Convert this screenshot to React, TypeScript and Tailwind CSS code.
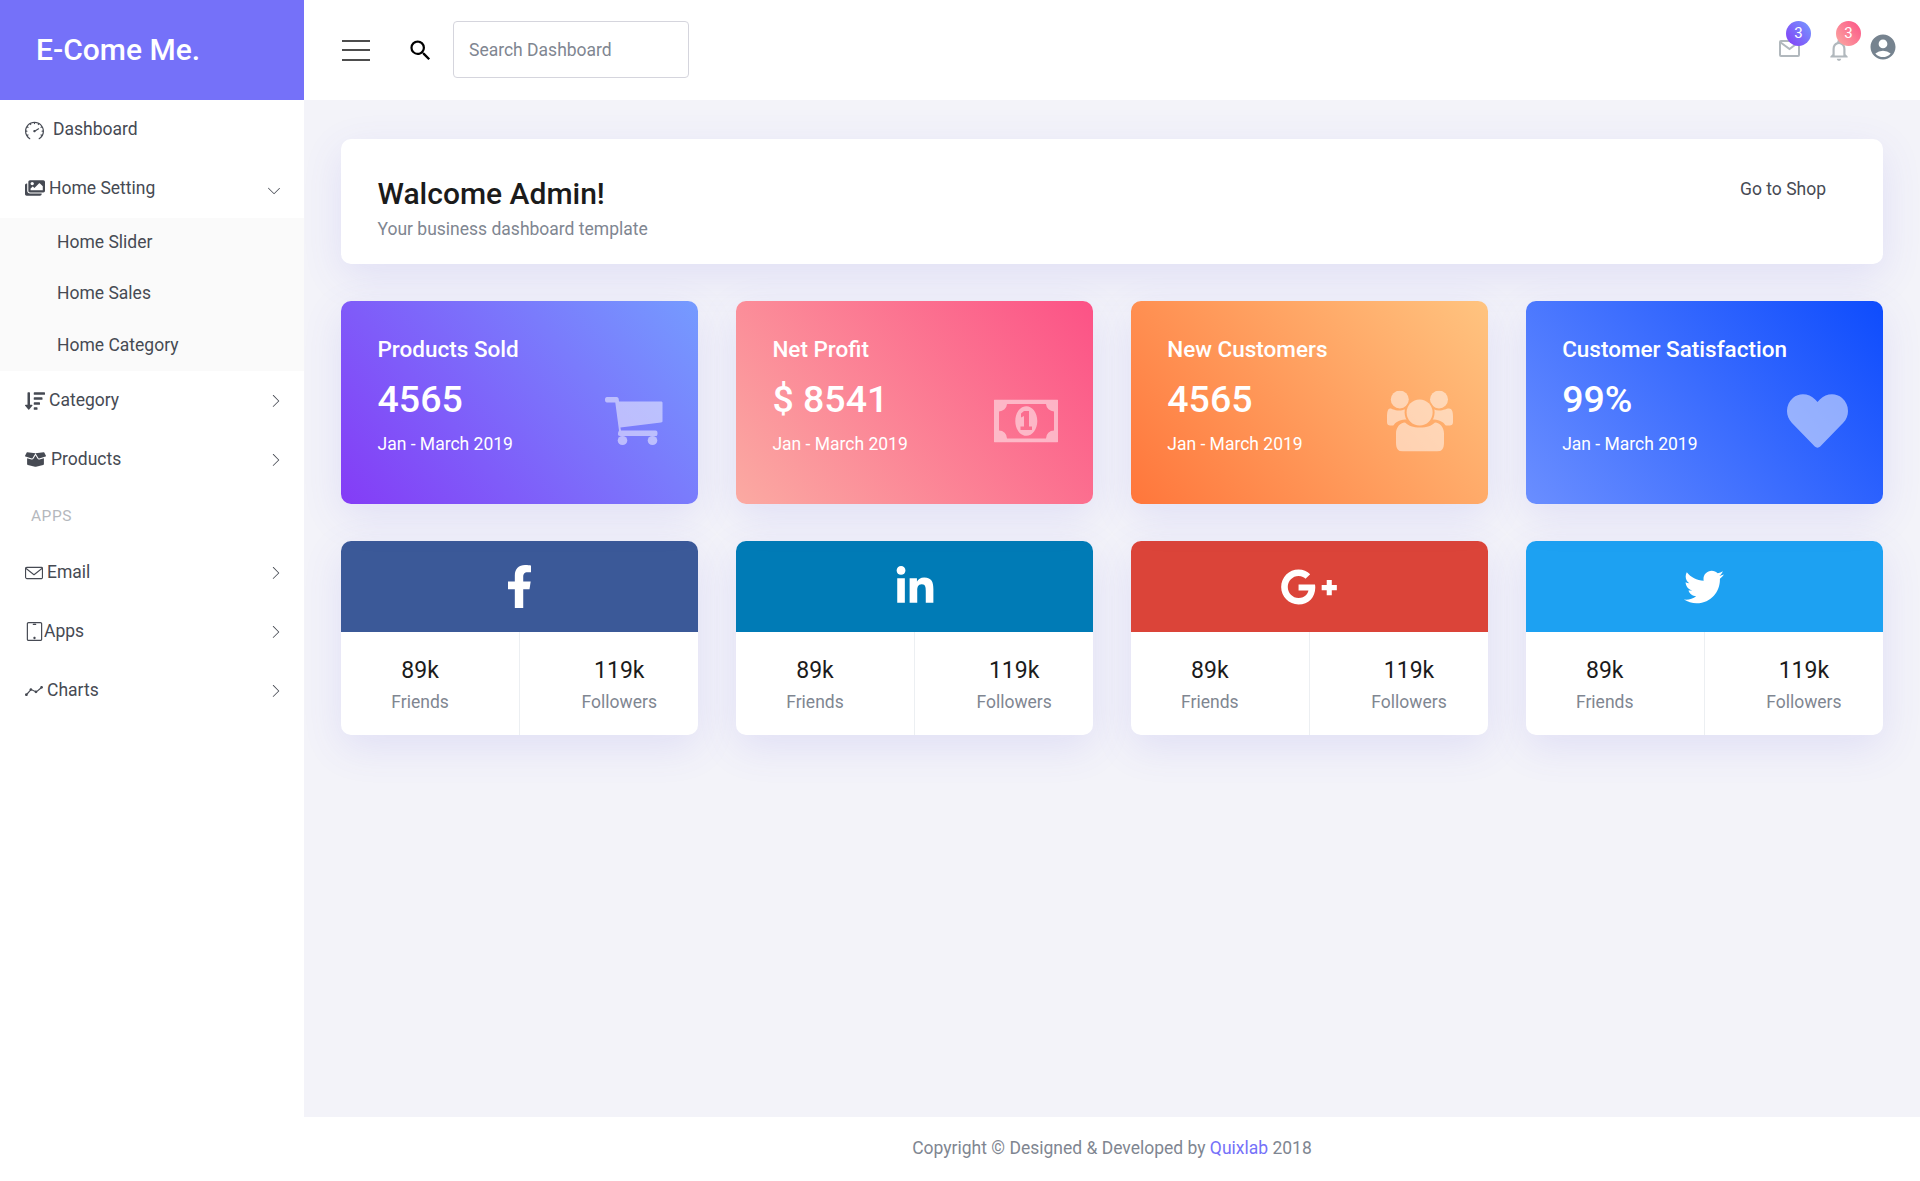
import React from 'react';
import { FaHeart, FaFacebookF, FaLinkedinIn, FaGooglePlusG, FaTwitter, FaImages, FaSortAmountDown, FaBoxOpen } from 'react-icons/fa';
import { SlSpeedometer, SlEnvolope, SlScreenTablet, SlGraph, SlArrowRight, SlArrowDown } from 'react-icons/sl';
import { MdSearch, MdAccountCircle, MdOutlineNotifications } from 'react-icons/md';

// ---- drawn icons ----

function CartIcon() {
  return (
    <svg width="58" height="48" viewBox="0 0 58 48" fill="white">
      <path d="M2 0H11.5C12.8 0 13.5.8 13.7 2L14 4.5H56C57 4.5 57.5 5 57.5 6V24C57.5 25 57 25.3 56 25.5L15.4 30.5L16 33.5H50.5C52 33.5 52.5 34.3 52.5 36.2C52.5 38.2 52 39 50.5 39H15C13.5 39 13 38.2 13 37C13 35.8 13.3 35 14 33.5L10.3 5.5H2C.7 5.5 0 4.5 0 2.8C0 1 .7 0 2 0Z" />
      <ellipse cx="17.5" cy="43.5" rx="4.8" ry="4.5" />
      <ellipse cx="47.5" cy="43.5" rx="4.8" ry="4.5" />
    </svg>
  );
}

function BillIcon() {
  return (
    <svg width="64" height="43" viewBox="0 0 64 43" fill="white">
      <path
        fillRule="evenodd"
        d="M1 0H63C63.6 0 64 .4 64 1V42C64 42.6 63.6 43 63 43H1C.4 43 0 42.6 0 42V1C0 .4.4 0 1 0ZM13 4.5H52A8 8 0 0 0 60 12V31A8 8 0 0 0 52 39H13A8 8 0 0 0 5 31V12A8 8 0 0 0 13 4.5Z"
      />
      <path
        fillRule="evenodd"
        d="M32.3 6.7C38.4 6.7 43.3 13.3 43.3 21.5C43.3 29.7 38.4 36.3 32.3 36.3C26.2 36.3 21.3 29.7 21.3 21.5C21.3 13.3 26.2 6.7 32.3 6.7ZM30 11.5H35V27H38V30.5H26.5V27H30V16.5L27 18V14Z"
      />
    </svg>
  );
}

function UsersIcon() {
  return (
    <svg width="66" height="61" viewBox="0 0 66 61" fill="white">
      <mask id="users-gap">
        <rect width="66" height="61" fill="white" />
        <ellipse cx="32.6" cy="22" rx="15" ry="15" fill="black" />
        <path d="M5 61V40C5 33 12 29 18 29H47C53 29 60 33 60 40V61Z" fill="black" />
      </mask>
      <g mask="url(#users-gap)">
        <ellipse cx="12.8" cy="9" rx="9" ry="9" />
        <ellipse cx="52" cy="9" rx="9" ry="9" />
        <path d="M3 18C5 18 7 20 12 20C17 20 19 18 21 18H44C46 18 48 20 52 20C57 20 59 18 62 18C65 18 66 21 66 26V31C66 34 65 35 62 35H4C1 35 0 34 0 31V26C0 21 1 18 3 18Z" />
      </g>
      <ellipse cx="32.6" cy="22" rx="13" ry="13" />
      <path d="M9 52V43C9 37 13 32 18 32C21 35 26 37 33 37C40 37 45 35 48 32C53 32 57 37 57 43V52C57 58 55 61 50 61H16C11 61 9 58 9 52Z" />
    </svg>
  );
}

function OpenMailIcon() {
  return (
    <svg width="21" height="17" viewBox="0 0 21 17" fill="none" stroke="#b1b8bd" strokeWidth="2">
      <rect x="1" y="1" width="19" height="15" rx="1" />
      <path d="M1 2L10.5 9L20 2" />
    </svg>
  );
}

// ---- sidebar ----

type NavRowProps = {
  icon: React.ReactNode;
  label: string;
  gap: string;
  height?: string;
};

function NavRow({ icon, label, gap, height = 'h-[59px]' }: NavRowProps) {
  return (
    <div className={`flex items-center ${height} pl-[25px] pr-[22px] text-[#464a53]`}>
      <span className={`flex items-center ${gap}`}>
        {icon}
        <span className="text-[17.5px]">{label}</span>
      </span>
      <SlArrowRight className="ml-auto text-[12px]" />
    </div>
  );
}

function Sidebar() {
  return (
    <aside className="w-[304px] shrink-0 bg-white">
      <div className="flex items-center h-[100px] pb-[2px] pl-[36px] bg-[#7571f9] text-white text-[30px] font-medium">E-Come Me.</div>
      <div className="flex items-center gap-[9px] h-[58px] pl-[25px] text-[#464a53]">
        <SlSpeedometer className="text-[19px] mt-[2px]" />
        <span className="text-[17.5px]">Dashboard</span>
      </div>
      <div className="flex items-center h-[60px] pl-[25px] pr-[24px] text-[#464a53]">
        <span className="flex items-center gap-[4px]">
          <FaImages className="text-[20px]" />
          <span className="text-[17.5px]">Home Setting</span>
        </span>
        <SlArrowDown className="ml-auto mt-[5px] text-[12px]" />
      </div>
      <div className="bg-[#fafafa] h-[153px] text-[17.5px] text-[#464a53]">
        <div className="flex items-center h-[49px] pl-[57px]">Home Slider</div>
        <div className="flex items-center h-[52px] pl-[57px]">Home Sales</div>
        <div className="flex items-center h-[52px] pl-[57px]">Home Category</div>
      </div>
      <NavRow icon={<FaSortAmountDown className="text-[20px]" />} label="Category" gap="gap-[4px]" />
      <NavRow icon={<FaBoxOpen className="text-[21px]" />} label="Products" gap="gap-[5px]" />
      <div className="flex items-center h-[54px] pt-[2px] pl-[31px] text-[15.5px] text-[#b5b8bd] tracking-[0.5px]">APPS</div>
      <NavRow icon={<SlEnvolope className="text-[18px]" />} label="Email" gap="gap-[4px]" />
      <NavRow icon={<SlScreenTablet className="text-[19px]" />} label="Apps" gap="gap-0" />
      <NavRow icon={<SlGraph className="text-[18px]" />} label="Charts" gap="gap-[4px]" />
    </aside>
  );
}

// ---- header ----

function Header() {
  return (
    <header className="flex items-center h-[100px] shrink-0 bg-white pl-[38px] pr-[22px]">
      <div className="flex flex-col justify-between w-[28px] h-[21px]">
        <span className="h-[2px] bg-[#4d4d4d]" />
        <span className="h-[2px] bg-[#4d4d4d]" />
        <span className="h-[2px] bg-[#4d4d4d]" />
      </div>
      <MdSearch className="ml-[37px] text-[27px] text-black" />
      <div className="flex items-center ml-[19px] -mt-[1px] w-[236px] h-[57px] px-[15px] pt-[1px] border border-[#d5d5dd] rounded-[4px] text-[17.5px] text-[#7f8691]">
        Search Dashboard
      </div>
      <div className="flex items-center ml-auto -mt-[7px]">
        <div className="relative mt-[4px] mr-[26px]">
          <OpenMailIcon />
          <span className="absolute -top-[19px] left-[7px] flex items-center justify-center w-[25px] h-[25px] rounded-full text-white text-[15px] bg-[linear-gradient(230deg,#759bff,#843cf6)]">3</span>
        </div>
        <div className="relative mt-[7px] mr-[16px]">
          <MdOutlineNotifications className="text-[26px] text-[#b1b8bd]" />
          <span className="absolute -top-[16px] left-[10px] flex items-center justify-center w-[25px] h-[25px] rounded-full text-white text-[15px] bg-[linear-gradient(230deg,#fc5286,#fbaaa2)]">3</span>
        </div>
        <MdAccountCircle className="text-[30px] text-[#76838f]" />
      </div>
    </header>
  );
}

// ---- cards ----

const CARD_SHADOW = 'shadow-[0_12px_40px_0_rgba(90,80,220,0.12)]';

type StatCardProps = {
  title: string;
  value: string;
  gradient: string;
  icon: React.ReactNode;
};

function StatCard({ title, value, gradient, icon }: StatCardProps) {
  return (
    <div className={`relative h-[203px] rounded-[10px] pl-[36.5px] pt-[34px] text-white ${gradient} ${CARD_SHADOW}`}>
      <div className="text-[22.5px] font-medium leading-[28px]">{title}</div>
      <div className="mt-[14px] text-[37.5px] font-medium leading-[44px]">{value}</div>
      <div className="mt-[11px] text-[17.5px] leading-[24px]">Jan - March 2019</div>
      <span className="absolute right-[35px] top-[120px] -translate-y-1/2 text-white opacity-50">{icon}</span>
    </div>
  );
}

function SocialCard({ bg, icon }: { bg: string; icon: React.ReactNode }) {
  return (
    <div className={`rounded-[10px] overflow-hidden bg-white ${CARD_SHADOW}`}>
      <div className={`flex items-center justify-center h-[91px] text-white ${bg}`}>{icon}</div>
      <div className="flex h-[103px]">
        <div className="flex-1 flex flex-col items-center pt-[23px] pr-[20px] border-r border-[#eceff2]">
          <div className="text-[23px] leading-[32px] text-[#1b1b1b]">89k</div>
          <div className="mt-[3px] text-[17.5px] leading-[24px] text-[#7f8691]">Friends</div>
        </div>
        <div className="flex-1 flex flex-col items-center pt-[23px] pl-[20px]">
          <div className="text-[23px] leading-[32px] text-[#1b1b1b]">119k</div>
          <div className="mt-[3px] text-[17.5px] leading-[24px] text-[#7f8691]">Followers</div>
        </div>
      </div>
    </div>
  );
}

export default function App() {
  return (
    <div className="flex h-screen overflow-hidden bg-[#f3f3f9] font-['Roboto',sans-serif]">
      <Sidebar />
      <main className="flex flex-col flex-1 min-w-0">
        <Header />
        <div className="flex-1 px-[37px] pt-[39px]">
          <div className={`flex justify-between h-[125px] rounded-[10px] bg-white pl-[36.5px] pr-[57px] pt-[37px] ${CARD_SHADOW}`}>
            <div>
              <div className="text-[30px] font-medium leading-[36px] text-[#1b1b1b]">Walcome Admin!</div>
              <div className="mt-[5px] text-[17.5px] leading-[24px] text-[#7f8691]">Your business dashboard template</div>
            </div>
            <div className="text-[17.5px] leading-[24px] mt-[1px] text-[#464a53]">Go to Shop</div>
          </div>
          <div className="grid grid-cols-4 gap-x-[37.5px] mt-[37px]">
            <StatCard title="Products Sold" value="4565" gradient="bg-[linear-gradient(230deg,#759bff,#843cf6)]" icon={<CartIcon />} />
            <StatCard title="Net Profit" value="$ 8541" gradient="bg-[linear-gradient(230deg,#fc5286,#fbaaa2)]" icon={<BillIcon />} />
            <StatCard title="New Customers" value="4565" gradient="bg-[linear-gradient(230deg,#ffc480,#ff763b)]" icon={<UsersIcon />} />
            <StatCard title="Customer Satisfaction" value="99%" gradient="bg-[linear-gradient(230deg,#0e4cfd,#6a8eff)]" icon={<FaHeart className="text-[61px]" />} />
          </div>
          <div className="grid grid-cols-4 gap-x-[37.5px] mt-[37px]">
            <SocialCard bg="bg-[#3b5998]" icon={<FaFacebookF className="text-[43px]" />} />
            <SocialCard bg="bg-[#007bb6]" icon={<FaLinkedinIn className="text-[42px]" />} />
            <SocialCard bg="bg-[#db4439]" icon={<FaGooglePlusG className="text-[58px]" />} />
            <SocialCard bg="bg-[#1da1f2]" icon={<FaTwitter className="text-[40px]" />} />
          </div>
        </div>
        <footer className="flex items-center justify-center h-[64px] pb-[2px] shrink-0 bg-white text-[17.5px] text-[#7f8691]">
          <span>Copyright © Designed &amp; Developed by <span className="text-[#7571f9]">Quixlab</span> 2018</span>
        </footer>
      </main>
    </div>
  );
}
